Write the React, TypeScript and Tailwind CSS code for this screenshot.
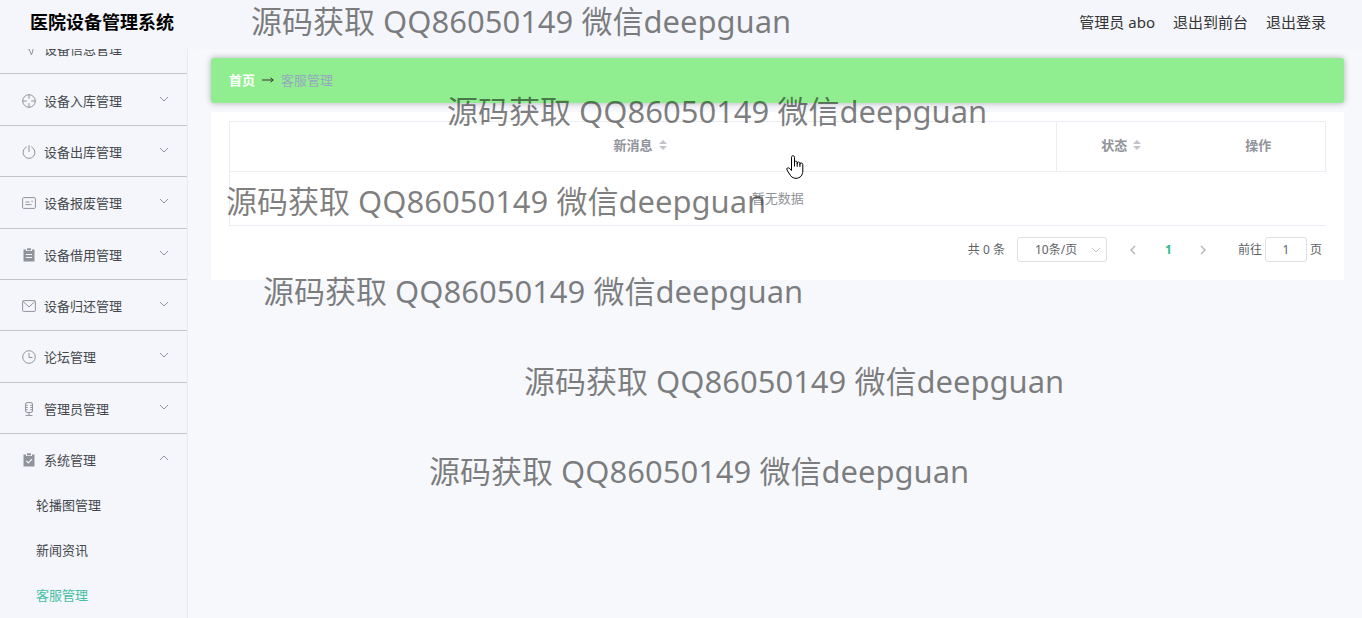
import { ReactNode } from "react";

interface MenuItem {
  label: string;
  icon: ReactNode;
}

const menu: MenuItem[] = [
  { label: "设备信息管理", icon: <path d="M1 5.500 13 1 9.500 13 7 7z" /> },
  {
    label: "设备入库管理",
    icon: (
      <>
        <circle cx="7" cy="7" r="6.300" />
        <path d="M7 .7v4.100M7 9.200v4.100M.7 7h4.100M9.200 7h4.100" />
      </>
    ),
  },
  {
    label: "设备出库管理",
    icon: <path d="M7 .5v6M4.300 2A6 6 0 1 0 9.700 2" strokeLinecap="round" />,
  },
  {
    label: "设备报废管理",
    icon: (
      <>
        <rect x=".6" y="1.600" width="12.800" height="10.800" rx="1" />
        <path d="M3.500 6h4M3.500 8.600h6M9.300 5.300h1.600" />
      </>
    ),
  },
  {
    label: "设备借用管理",
    icon: (
      <>
        <path d="M1.500 1.500H4V3h6V1.500h2.500v12h-11z" fill="currentColor" stroke="none" />
        <path d="M5 .3h4v2H5z" fill="currentColor" stroke="none" />
        <path d="M4 6.500h6M4 9.500h6" stroke="#f4f6fb" strokeWidth="1.200" />
      </>
    ),
  },
  {
    label: "设备归还管理",
    icon: (
      <>
        <rect x=".6" y="1.600" width="12.800" height="10.800" rx="1" />
        <path d="M1 2.300 7 8l6-5.700" />
      </>
    ),
  },
  {
    label: "论坛管理",
    icon: (
      <>
        <circle cx="7" cy="7" r="6.300" />
        <path d="M7 3v4.500h3.500" />
      </>
    ),
  },
  {
    label: "管理员管理",
    icon: (
      <>
        <rect x="3.500" y=".6" width="7" height="9.800" rx="1.500" />
        <path d="M7 10.400v3M3.500 13.400h7M3.500 3.300h2.200M3.500 5.500h2.200M3.500 7.700h2.200M8.300 3.300h2.200M8.300 5.500h2.200M8.300 7.700h2.200" />
      </>
    ),
  },
];

const claimIcon = (
  <>
    <path d="M1.500 1.500H4V3h6V1.500h2.500v12h-11z" fill="currentColor" stroke="none" />
    <path d="M5 .3h4v2H5z" fill="currentColor" stroke="none" />
    <path d="m4.300 7.800 2 2L10 6.100" stroke="#f4f6fb" strokeWidth="1.200" />
  </>
);

const subMenu = ["轮播图管理", "新闻资讯", "客服管理"];

const watermarks = [
  "left-[251px] top-[1px]",
  "left-[447px] top-[91px]",
  "left-[226px] top-[181px]",
  "left-[263px] top-[271px]",
  "left-[524px] top-[361px]",
  "left-[429px] top-[451px]",
];

function MenuIcon({ children }: { children: ReactNode }) {
  return (
    <svg viewBox="0 0 14 14" className="w-3.5 h-3.5 shrink-0 text-[#909399]" fill="none" stroke="currentColor">
      {children}
    </svg>
  );
}

function Chevron({ className, d = "m1 1 4 4 4-4" }: { className: string; d?: string }) {
  return (
    <svg viewBox="0 0 10 6" className={className} fill="none" stroke="currentColor">
      <path d={d} />
    </svg>
  );
}

function SortCaret() {
  return (
    <svg viewBox="0 0 8 10" className="w-2 h-2.5 text-[#c0c4cc]" fill="currentColor">
      <path d="M4 0 8 4H0zM4 10 0 6h8z" />
    </svg>
  );
}

function Sidebar() {
  return (
    <nav className="w-[188px] shrink-0 flex flex-col justify-end overflow-hidden bg-[#f4f6fb] border-r border-[#e9ebf0] text-[#45484d]">
      <ul className="grid auto-rows-fr h-[411px] shrink-0">
        {menu.map((item) => (
          <li key={item.label} className="border-b border-[#c3c5cb]">
            <button aria-expanded={false} className="w-full h-full flex items-center pl-[22px] pr-[18px] pt-0.5 gap-2">
              <MenuIcon>{item.icon}</MenuIcon>
              <span>{item.label}</span>
              <Chevron className="w-2.5 h-1.5 ml-auto mb-1 text-[#909399]" />
            </button>
          </li>
        ))}
      </ul>
      <button aria-expanded={true} className="w-full h-[49px] shrink-0 flex items-center pl-[22px] pr-[18px] pt-0.5 gap-2">
        <MenuIcon>{claimIcon}</MenuIcon>
        <span>系统管理</span>
        <Chevron className="w-2.5 h-1.5 ml-auto mb-1 text-[#909399]" d="m1 5 4-4 4 4" />
      </button>
      <ul className="shrink-0">
        {subMenu.map((label) => (
          <li key={label}>
            <a
              href="#"
              className={`h-[45px] flex items-center pl-9 pb-0.5 ${label === "客服管理" ? "text-[#45c0a5]" : ""}`}
            >
              {label}
            </a>
          </li>
        ))}
      </ul>
    </nav>
  );
}

function MessageTable() {
  return (
    <table className="w-full table-fixed border-collapse text-[#909399]">
      <colgroup>
        <col />
        <col className="w-[135px]" />
        <col className="w-[134px]" />
      </colgroup>
      <thead>
        <tr className="h-[50px] border border-[#ebeef5]">
          <th className="font-bold pb-1 pr-1.5 border-r border-[#ebeef5]">
            <span className="flex items-center justify-center gap-1.5">
              新消息
              <SortCaret />
            </span>
          </th>
          <th className="font-bold pb-1 pr-1.5">
            <span className="flex items-center justify-center gap-1.5">
              状态
              <SortCaret />
            </span>
          </th>
          <th className="font-bold pb-1">操作</th>
        </tr>
      </thead>
      <tbody>
        <tr className="h-[54px] border-b border-l border-[#ebeef5]">
          <td colSpan={3} className="text-center pb-0.5">
            暂无数据
          </td>
        </tr>
      </tbody>
    </table>
  );
}

function Pagination() {
  return (
    <div className="flex items-center justify-end pt-[11px] pr-1 text-xs text-[#606266]">
      <span>共 0 条</span>
      <div className="relative ml-3">
        <select
          aria-label="每页条数"
          className="appearance-none block w-[90px] h-[25px] pl-[17px] text-xs bg-white border border-[#dcdfe6] rounded-[3px]"
        >
          <option>10条/页</option>
        </select>
        <Chevron className="absolute right-1.5 top-2.5 w-2.5 h-1.5 text-[#c0c4cc] pointer-events-none" />
      </div>
      <div className="flex items-center ml-[9px]">
        <button aria-label="上一页" className="w-[35px] flex justify-center text-[#b0b4bc]">
          <svg viewBox="0 0 6 10" className="w-1.5 h-2.5" fill="none" stroke="currentColor" strokeWidth="1.400">
            <path d="M5 1 1 5l4 4" />
          </svg>
        </button>
        <button aria-current="page" className="w-[35px] font-bold text-[#2fb88f]">
          1
        </button>
        <button aria-label="下一页" className="w-[35px] flex justify-center text-[#b0b4bc]">
          <svg viewBox="0 0 6 10" className="w-1.5 h-2.5" fill="none" stroke="currentColor" strokeWidth="1.400">
            <path d="m1 1 4 4-4 4" />
          </svg>
        </button>
      </div>
      <label className="flex items-center ml-[17px] gap-[3px]">
        前往
        <input
          type="text"
          defaultValue="1"
          className="w-[42px] h-[25px] text-center bg-white border border-[#dcdfe6] rounded-[3px]"
        />
        页
      </label>
    </div>
  );
}

export default function App() {
  return (
    <div className="relative h-screen flex flex-col overflow-hidden bg-[#f7f8fc] text-[13px] leading-5 text-[#303133] font-['Noto_Sans','Noto_Sans_CJK_SC',sans-serif]">
      <header className="h-[49px] shrink-0 flex items-center justify-between pl-[30px] pr-9 pb-1.5 bg-[#f4f6fb]">
        <h1 className="text-lg font-bold text-black">医院设备管理系统</h1>
        <div className="flex items-center gap-[18px] text-[15px] text-[#333]">
          <span>管理员 abo</span>
          <a href="#">退出到前台</a>
          <a href="#">退出登录</a>
        </div>
      </header>
      <div className="flex flex-1 min-h-0">
        <Sidebar />
        <main className="flex-1 min-w-0 pt-[9px] pl-[23px] pr-[18px]">
          <div className="h-[45px] flex items-center px-[18px] pb-0.5 gap-[7px] rounded-[3px] bg-[#90ee90] shadow-[0_0_6px_rgba(0,0,0,0.3)]">
            <a href="#" className="font-bold text-white">
              首页
            </a>
            <svg viewBox="0 0 12 6" className="w-3 h-1.5 text-[#303133]" fill="none" stroke="currentColor">
              <path d="M0 3h11M8.500.8 11.300 3 8.500 5.200" />
            </svg>
            <span className="text-[#97a8be]">客服管理</span>
          </div>
          <section className="mt-[9px] px-[18px] pt-[9px] pb-[18px] bg-white">
            <MessageTable />
            <Pagination />
          </section>
        </main>
      </div>
      <div className="absolute inset-0 overflow-hidden pointer-events-none">
        {watermarks.map((pos) => (
          <span key={pos} className={`absolute ${pos} text-[31px] leading-10 whitespace-nowrap text-black/50`}>
            源码获取 QQ86050149 微信deepguan
          </span>
        ))}
        <svg
          viewBox="0 0 18 24"
          className="absolute left-[786px] top-[155px] w-[18px] h-6"
          fill="#fff"
          stroke="#000"
          strokeLinejoin="round"
        >
          <path d="M5.500 14V2.300C5.500.2 8.500.2 8.500 2.300V8.500 7.300c0-1.500 2.700-1.500 2.700.3v1-.6c0-1.500 2.700-1.300 2.700.4v1-.5c0-1.400 2.900-1.300 2.900.6V16c0 4-2.500 7.300-6.800 7.300-3.500 0-5-1.800-6.500-4.300L1 15c-.8-1.800 1-2.800 2.300-1.800L5.500 15.500z" />
          <path d="M8.500 8v3.500M11.200 8v3.800M13.900 9v3" fill="none" />
        </svg>
      </div>
    </div>
  );
}
